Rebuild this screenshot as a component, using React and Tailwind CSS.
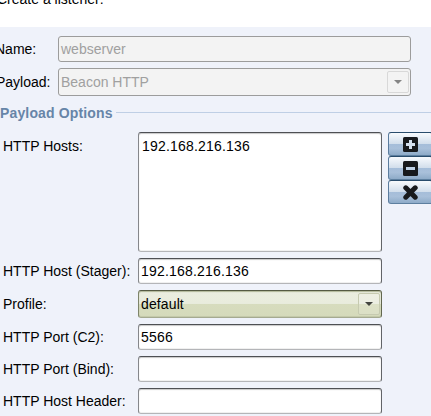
const field =
  'h-[26px] rounded-[3px] border border-t-[#4e5054] border-x-[#85878b] border-r-[#626468] border-b-[#b4b5b8] bg-white shadow-[inset_0_1px_1px_#c8c8c8,inset_0_-1px_0_#f0f0f0]';

function Arrow({ disabled }) {
  return (
    <span
      className={`flex h-[22px] w-[22px] shrink-0 items-center justify-center rounded-[2px] border ${
        disabled ? 'border-[#d8d8d8] bg-[#f3f3f3]' : 'border-[#c6cab0] bg-white/15'
      }`}
    >
      <svg width="8" height="4" viewBox="0 0 8 4" fill={disabled ? '#858585' : '#42443f'}>
        <path d="M0 0H8L4 4Z" />
      </svg>
    </span>
  );
}

function IconButton({ label, children }) {
  return (
    <button
      aria-label={label}
      className="flex h-6 w-[45px] items-center justify-center rounded-[3px] border border-t-[#294c6c] border-x-[#5b7c9e] border-b-[#5d7f9f] bg-[linear-gradient(#f8fafd_0%,#d3dfec_48%,#a5bdd9_50%,#a9c0da_70%,#8eabc8_100%)]"
    >
      <svg width="15" height="15" viewBox="0 0 15 15">
        {children}
      </svg>
    </button>
  );
}

function Row({ label, children, className = 'h-8' }) {
  return (
    <div className={`flex items-start ${className}`}>
      <label className="w-[135px] shrink-0 pt-[5px] leading-4">{label}</label>
      <div className="w-[244px]">{children}</div>
    </div>
  );
}

export default function App() {
  return (
    <div className="h-[416px] w-[431px] overflow-hidden bg-[#eff2fa] font-['Liberation_Sans',Arial,sans-serif] text-[14px] leading-4 text-black">
      <header className="flex h-[27px] items-start bg-white">
        <p className="-mt-[9px] -ml-[3px]">Create a listener:</p>
      </header>
      <div className="flex h-8 w-[411px] items-start pt-[9px]">
        <label className="-ml-[5px] w-[63px] shrink-0 pt-[5px]">Name:</label>
        <div className="flex h-[26px] flex-1 items-center rounded-[3px] border border-[#9c9c9c] bg-[#f3f3f3] px-[2px] text-[#a0a0a0]">
          webserver
        </div>
      </div>
      <div className="flex h-[45px] w-[411px] items-start pt-[9px]">
        <label className="-ml-1 w-[62px] shrink-0 pt-[6px]">Payload:</label>
        <div className="flex h-7 flex-1 items-center justify-between rounded-[3px] border border-[#9c9c9c] bg-[#f3f3f3] pr-[1px] pl-[2px] text-[#a0a0a0]">
          Beacon HTTP
          <Arrow disabled />
        </div>
      </div>
      <div className="flex h-7 items-start">
        <h2 className="mt-px font-bold tracking-[0.15px] whitespace-nowrap text-[#6785a8]">Payload Options</h2>
        <div className="mt-2 ml-[3px] h-px flex-1 bg-[#bfcfe5]" />
      </div>
      <main className="pl-[3px]">
        <div className="flex items-start">
          <Row label="HTTP Hosts:" className="h-[126px] [&>label]:pt-[6px]">
            <div className="h-[120px] rounded-[3px] border border-t-[#4e5054] border-x-[#85878b] border-r-[#626468] border-b-[#b4b5b8] bg-white px-[3px] pt-[5px] tracking-[0.19px] shadow-[inset_0_1px_1px_#c8c8c8,inset_0_-1px_0_#f0f0f0]">
              192.168.216.136
            </div>
          </Row>
          <div className="ml-[6px] flex flex-col">
            <IconButton label="Add">
              <rect width="15" height="15" rx="1.5" fill="#181a1d" />
              <path d="M7.5 3v9M3 7.5h9" stroke="#d5e1ef" strokeWidth="3" />
            </IconButton>
            <IconButton label="Remove">
              <rect width="15" height="15" rx="1.5" fill="#181a1d" />
              <path d="M3 7.5h9" stroke="#bed1e6" strokeWidth="3" />
            </IconButton>
            <IconButton label="Clear">
              <path d="M2.8 2.8l9.4 9.4M12.2 2.8L2.8 12.2" stroke="#181a1d" strokeWidth="5" strokeLinecap="round" />
            </IconButton>
          </div>
        </div>
        <Row label="HTTP Host (Stager):">
          <div className={`${field} px-[2px] pt-[4px] tracking-[0.19px]`}>192.168.216.136</div>
        </Row>
        <Row label="Profile:" className="h-[34px] [&>label]:pt-[6px]">
          <div className="flex h-7 items-center justify-between rounded-[3px] border border-t-[#555a43] border-x-[#7e846a] border-r-[#62674f] border-b-[#a5aa91] bg-[linear-gradient(#eaeddf_0%,#e9ecdd_48%,#d7dcbe_50%,#d5dabb_100%)] pr-[1px] pl-[2px] tracking-[0.12px] shadow-[inset_0_1px_1px_#b1b698,inset_0_-1px_0_#c4c9aa]">
            default
            <Arrow />
          </div>
        </Row>
        <Row label="HTTP Port (C2):">
          <div className={`${field} px-[2px] pt-[4px] tracking-[0.19px]`}>5566</div>
        </Row>
        <Row label="HTTP Port (Bind):">
          <div className={field} />
        </Row>
        <Row label="HTTP Host Header:">
          <div className={field} />
        </Row>
      </main>
    </div>
  );
}
